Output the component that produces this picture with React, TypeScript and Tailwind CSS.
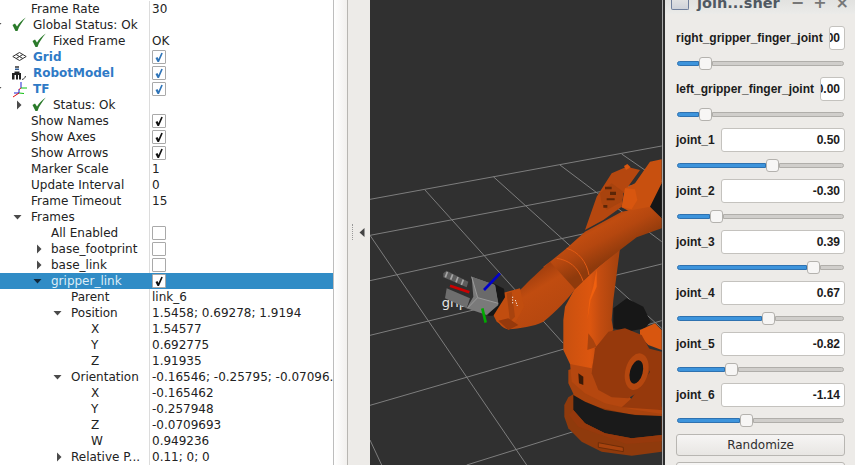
import React from "react";

type Row = {
  label: string;
  indent: number;
  value?: string;
  check?: "blue" | "black" | "none";
  arrow?: { x: number; dir: "down" | "right" };
  icon?: "ok" | "grid" | "robot" | "tf";
  iconX?: number;
  bold?: boolean;
  selected?: boolean;
};

const rows: Row[] = [
  { label: "Frame Rate", indent: 31, value: "30" },
  { label: "Global Status: Ok", indent: 33, icon: "ok", iconX: 12, arrow: { x: -7, dir: "down" } },
  { label: "Fixed Frame", indent: 53, value: "OK", icon: "ok", iconX: 32 },
  { label: "Grid", indent: 33, bold: true, check: "blue", icon: "grid", iconX: 12 },
  { label: "RobotModel", indent: 33, bold: true, check: "blue", icon: "robot", iconX: 11 },
  { label: "TF", indent: 33, bold: true, check: "blue", icon: "tf", iconX: 11, arrow: { x: -7, dir: "down" } },
  { label: "Status: Ok", indent: 53, icon: "ok", iconX: 32, arrow: { x: 14, dir: "right" } },
  { label: "Show Names", indent: 31, check: "black" },
  { label: "Show Axes", indent: 31, check: "black" },
  { label: "Show Arrows", indent: 31, check: "black" },
  { label: "Marker Scale", indent: 31, value: "1" },
  { label: "Update Interval", indent: 31, value: "0" },
  { label: "Frame Timeout", indent: 31, value: "15" },
  { label: "Frames", indent: 31, arrow: { x: 13, dir: "down" } },
  { label: "All Enabled", indent: 51, check: "none" },
  { label: "base_footprint", indent: 51, check: "none", arrow: { x: 34, dir: "right" } },
  { label: "base_link", indent: 51, check: "none", arrow: { x: 34, dir: "right" } },
  { label: "gripper_link", indent: 51, check: "black", selected: true, arrow: { x: 33, dir: "down" } },
  { label: "Parent", indent: 71, value: "link_6" },
  { label: "Position", indent: 71, value: "1.5458; 0.69278; 1.9194", arrow: { x: 53, dir: "down" } },
  { label: "X", indent: 91, value: "1.54577" },
  { label: "Y", indent: 91, value: "0.692775" },
  { label: "Z", indent: 91, value: "1.91935" },
  { label: "Orientation", indent: 71, value: "-0.16546; -0.25795; -0.07096.", arrow: { x: 53, dir: "down" } },
  { label: "X", indent: 91, value: "-0.165462" },
  { label: "Y", indent: 91, value: "-0.257948" },
  { label: "Z", indent: 91, value: "-0.0709693" },
  { label: "W", indent: 91, value: "0.949236" },
  { label: "Relative P...", indent: 71, value: "0.11; 0; 0", arrow: { x: 54, dir: "right" } },
];

function Arrow({ dir, selected }: { dir: "down" | "right"; selected?: boolean }) {
  const c = selected ? "#10283c" : "#4a4a4a";
  return (
    <svg width="10" height="10" viewBox="0 0 10 10" className="block">
      {dir === "down" ? <path d="M0.5 3h8l-4 4.500z" fill={c} /> : <path d="M3 0.500v9l4.500-4.500z" fill={c} />}
    </svg>
  );
}

function OkIcon() {
  return (
    <svg width="15" height="15" viewBox="0 0 15 15" className="block">
      <path d="M0.500 8L3 6.500L5 9.500C7 6 10 3 13.800 0.500C10.500 4.500 7 9 5.500 14L3.500 14z" fill="#2a7a2a" />
    </svg>
  );
}

function GridIcon() {
  return (
    <svg width="15" height="15" viewBox="0 0 15 15" className="block">
      <path d="M0.800 7.500L7.500 3.500l6.700 4-6.700 4zM4.100 5.500l6.700 4M10.900 5.500l-6.700 4" fill="none" stroke="#333" strokeWidth="1" />
    </svg>
  );
}

function RobotIcon() {
  return (
    <svg width="16" height="16" viewBox="0 0 16 16" className="block">
      <rect x="4" y="1" width="4" height="2" fill="#666" />
      <rect x="4" y="3.500" width="4" height="1.500" fill="#2f5f9a" />
      <path d="M1 14.500V8h2.500V6.500h5V8H10v6.500H8V10H7v4.500H5V10H3.500v4.500z" fill="#222" />
      <path d="M11 14.500c2-.5 3-1.500 3.500-3.500" fill="none" stroke="#333" strokeWidth="1" />
    </svg>
  );
}

function TfIcon() {
  return (
    <svg width="17" height="17" viewBox="0 0 17 17" className="block">
      <path d="M10 7V1" stroke="#2020d0" strokeWidth="1" />
      <path d="M10 7h6" stroke="#10c010" strokeWidth="1" />
      <path d="M8 8v4M8 12H3" stroke="#2020d0" strokeWidth="1" fill="none" />
      <path d="M8 12l5 .5" stroke="#10c010" strokeWidth="1" />
      <path d="M8 12l-6 4" stroke="#e01010" strokeWidth="1" />
      <path d="M10 7l-2 1.500" stroke="#e01010" strokeWidth="1" />
    </svg>
  );
}

function Check({ kind }: { kind: "blue" | "black" | "none" }) {
  return (
    <span className="w-[14px] h-[14px] border border-[#a9a9a9] bg-white rounded-[1px] flex items-center justify-center shrink-0">
      {kind !== "none" && (
        <svg width="10" height="11" viewBox="0 0 10 11" className="block">
          <path d="M1.500 6L3.500 5L4.500 7L7.300 0.800L8.800 1.200L5 10L3.500 10z" fill={kind === "blue" ? "#2f74b8" : "#111"} />
        </svg>
      )}
    </span>
  );
}

function TreeRow({ r }: { r: Row }) {
  return (
    <div className={`relative h-4 flex ${r.selected ? "bg-[#308cc6]" : ""}`}>
      {r.arrow && (
        <span className="absolute top-[3px]" style={{ left: r.arrow.x }}>
          <Arrow dir={r.arrow.dir} selected={r.selected} />
        </span>
      )}
      {r.icon && (
        <span className="absolute top-0" style={{ left: r.iconX }}>
          {r.icon === "ok" && <OkIcon />}
          {r.icon === "grid" && <GridIcon />}
          {r.icon === "robot" && <RobotIcon />}
          {r.icon === "tf" && <TfIcon />}
        </span>
      )}
      <div
        className={`w-[149px] shrink-0 whitespace-nowrap leading-4 ${r.bold ? "font-bold text-[#2f7ac6]" : r.selected ? "text-[#dcecf7]" : "text-[#222]"}`}
        style={{ paddingLeft: r.indent }}
      >
        {r.label}
      </div>
      <div className={`flex-1 border-l pl-[2px] flex items-center overflow-hidden whitespace-nowrap leading-4 text-[#222] ${r.selected ? "border-[#308cc6]" : "border-[#dcdcdc]"}`}>
        {r.check ? <Check kind={r.check} /> : r.value}
      </div>
    </div>
  );
}

const L = "#7d7d7d";
const gridLines = [
  [120, 598, 995, 438], [120, 706, 995, 540], [120, 842, 995, 650], [120, 1006, 995, 792], [120, 1216, 995, 962], [410, 1395, 730, 1295],
  [285, 570, 700, 1030], [490, 530, 995, 985], [690, 495, 995, 725], [875, 462, 995, 545], [120, 706, 590, 1395], [120, 1320, 155, 1395],
];

function Scene() {
  return (
    <svg viewBox="120 0 876 1395" preserveAspectRatio="none" className="w-full h-full block">
      <defs>
        <linearGradient id="armG" gradientUnits="userSpaceOnUse" x1="780" y1="640" x2="850" y2="770">
          <stop offset="0" stopColor="#96390c" />
          <stop offset="0.35" stopColor="#c04c10" />
          <stop offset="0.6" stopColor="#b5470f" />
          <stop offset="1" stopColor="#8f3a0c" />
        </linearGradient>
        <linearGradient id="elbowG" gradientUnits="userSpaceOnUse" x1="600" y1="800" x2="690" y2="950">
          <stop offset="0" stopColor="#96390c" />
          <stop offset="0.4" stopColor="#c04c10" />
          <stop offset="1" stopColor="#b5470f" />
        </linearGradient>
        <linearGradient id="linkG" gradientUnits="userSpaceOnUse" x1="700" y1="950" x2="860" y2="950">
          <stop offset="0" stopColor="#c8500f" />
          <stop offset="0.5" stopColor="#dc560f" />
          <stop offset="0.7" stopColor="#c24c10" />
          <stop offset="1" stopColor="#a8430e" />
        </linearGradient>
        <radialGradient id="hubG" gradientUnits="userSpaceOnUse" cx="860" cy="1095" r="125">
          <stop offset="0" stopColor="#ec5a14" />
          <stop offset="0.5" stopColor="#d8540f" />
          <stop offset="0.8" stopColor="#b0450e" />
          <stop offset="1" stopColor="#96390c" />
        </radialGradient>
        <linearGradient id="plateG" gradientUnits="userSpaceOnUse" x1="700" y1="1250" x2="995" y2="1350">
          <stop offset="0" stopColor="#8f3a0c" />
          <stop offset="0.4" stopColor="#c14d0f" />
          <stop offset="1" stopColor="#d8560f" />
        </linearGradient>
      </defs>
      <rect x="120" y="0" width="876" height="1395" fill="#303030" />
      {gridLines.map((l, i) => (
        <line key={i} x1={l[0]} y1={l[1]} x2={l[2]} y2={l[3]} stroke={L} strokeWidth="3" />
      ))}

      {/* lower part, traced in a crop whose origin is 675,930 */}
      <g transform="translate(675 930)">
        <path d="M28 285L40 262L60 250L320 290V425L230 437L140 425L80 395L40 355L28 320z" fill="url(#plateG)" />
        <path d="M40 180L70 170L110 220L170 265L240 290L320 300V320L220 312L130 292L60 262L40 220z" fill="#a8430e" />
        <path d="M55 255L90 275L150 300L240 315L320 318V375L230 385L150 370L90 340L55 300z" fill="#1a1a1a" />
        <path d="M55 300L90 340L150 370L230 385L320 375V394L215 402L130 372L70 350L42 315z" fill="#96390c" />
        <path d="M130 398L205 412V425L130 412z" fill="#a8430e" stroke="#6e2d08" strokeWidth="3" />
        <path d="M45 160L110 130L170 200L240 280L320 300V312L230 298L150 280L90 250L50 215z" fill="#b5470f" />
        <path d="M70 190L85 200L85 225L72 220z" fill="#3a1a08" />
      </g>

      {/* motor behind the link and hub */}
      <path d="M850 925L890 895L940 920L962 965L945 985L890 995L850 985z" fill="#171717" />

      {/* lower link */}
      <path d="M735 865L705 920L700 960L700 1050L720 1092L785 1105L800 1040L850 990L845 960L850 900L870 745L800 805z" fill="url(#linkG)" />
      <path d="M800 808L790 860L778 900L772 960L782 900L800 860z" fill="#f0600f" />
      <path d="M775 1000L772 1050L800 1040L790 1020z" fill="#a8430e" />

      {/* hub, same crop origin */}
      <g transform="translate(675 930)">
        <path d="M260 110L320 125V300L200 292L230 265L285 185z" fill="#96390c" />
        <path d="M255 60L300 40L320 60V120L280 105L255 80z" fill="#d8560f" />
        <path d="M120 115L160 65L210 55L260 75L285 120L285 180L260 240L220 265L170 262L130 240L110 190z" fill="url(#hubG)" />
        <ellipse cx="245" cy="185" rx="34" ry="56" fill="#b5470f" transform="rotate(15 245 185)" />
        <ellipse cx="244" cy="186" rx="19" ry="36" fill="#151515" transform="rotate(15 244 186)" />
      </g>

      {/* upper part, traced in a crop whose origin is 660,450 */}
      <g transform="translate(660 450)">
        <path d="M105 240L140 140L185 70L230 50L270 60L220 130L215 170L160 210z" fill="#b5470f" />
        <path d="M150 130L185 100L220 125L215 155L170 180L155 160z" fill="#a8430e" />
        <path d="M165 110h20v8h-20zM180 125h18v10h-18zM170 145h24v6h-24zM160 165h12v8h-12z" fill="#5c2607" />
        <path d="M222 48L232 42L242 52L228 60z" fill="#d8560f" />
        <path d="M300 145L335 100V205L300 175z" fill="#161616" />
        <path d="M215 172L225 115L255 100L300 35L335 28V100L300 170L300 185L240 185z" fill="#c8500f" />
        <path d="M215 172L225 115L255 118L262 150L245 178z" fill="#d8560f" />
      </g>

      {/* arm */}
      <path d="M640 800L660 785L710 745L765 695L875 635L960 620L995 655V685L920 712L870 750L800 805L735 868L700 900z" fill="url(#armG)" />

      {/* elbow */}
      <path d="M570 870C600 840 625 815 660 785L735 868C715 895 680 935 640 965C610 980 570 985 535 988C520 985 510 975 505 965L530 900z" fill="url(#elbowG)" />
      <path d="M680 775C715 780 745 800 760 845M710 745C745 755 770 785 777 825" fill="none" stroke="#e05a14" strokeWidth="3" />

      {/* wrist */}
      <path d="M515 880L570 865L582 920L560 960L535 988L500 965L490 945z" fill="#c14d0f" />
      <path d="M530 880L545 875L555 950L540 965z" fill="#a8430e" />
      <path d="M505 962L535 955L565 975L535 990z" fill="#96390c" />

      <text x="335" y="922" fontSize="39" fill="#e8e8e8" fontFamily="'DejaVu Sans', sans-serif">grip</text>

      {/* gripper, traced in a crop whose origin is 300,750 */}
      <g transform="translate(300 750)">
        <path d="M40 70L50 62L115 95L110 112L40 82z" fill="#5e5e5e" />
        <path d="M52 66L46 82M68 73L62 89M84 81L78 97M100 89L94 105" stroke="#a6a6a6" strokeWidth="5" />
        <path d="M50 115L120 145L110 175L45 145z" fill="#6e6e6e" />
        <path d="M190 100L222 116L225 142L190 197L172 197L200 155z" fill="#171717" />
        <path d="M125 80L195 105L205 165L170 195L110 175L130 140z" fill="#7a7a7a" />
        <path d="M125 80L195 105L205 160L143 143z" fill="#6a6a6a" />
        <path d="M125 80L143 143L205 160M143 143L112 175" stroke="#9a9a9a" strokeWidth="3" fill="none" />
      </g>
      <line x1="462" y1="870" x2="510" y2="820" stroke="#0000cc" strokeWidth="8" />
      <line x1="360" y1="857" x2="418" y2="877" stroke="#cc0000" strokeWidth="8" />
      <line x1="457" y1="925" x2="467" y2="968" stroke="#00aa00" strokeWidth="8" />
      <path d="M548 890v20M556 900l6 18" stroke="#f4e6dc" strokeWidth="3" strokeDasharray="4 4" />
    </svg>
  );
}

const joints = [
  { name: "right_gripper_finger_joint", val: "0.00", h: 705, w: "w-[16px]" },
  { name: "left_gripper_finger_joint", val: "0.00", h: 705, w: "w-[25px]" },
  { name: "joint_1", val: "0.50", h: 772, w: "w-[124px]" },
  { name: "joint_2", val: "-0.30", h: 716, w: "w-[124px]" },
  { name: "joint_3", val: "0.39", h: 813, w: "w-[124px]" },
  { name: "joint_4", val: "0.67", h: 768, w: "w-[124px]" },
  { name: "joint_5", val: "-0.82", h: 731, w: "w-[124px]" },
  { name: "joint_6", val: "-1.14", h: 746, w: "w-[124px]" },
];

function JointRow({ j }: { j: (typeof joints)[number] }) {
  return (
    <div className="h-[51px] flex flex-col">
      <div className="h-[24px] flex items-center justify-between">
        <span className="font-bold whitespace-nowrap text-[#1c1c1c]">{j.name}</span>
        <span className={`${j.w} h-[24px] shrink-0 bg-white border border-[#c4c2be] rounded-[3px] flex items-center justify-end overflow-hidden pr-[4px] font-bold text-[#1c1c1c]`}>
          {j.val}
        </span>
      </div>
      <div className="mt-[7px] pl-px pr-px flex items-center h-[13px]">
        <div className="h-[5px] bg-[#3d94dc] border border-[#2f72b0] rounded-l-[3px]" style={{ width: j.h - 677 - 6 }} />
        <div className="w-[13px] h-[13px] shrink-0 bg-[#f7f6f5] border border-[#b4b2ae] rounded-[3px]" />
        <div className="flex-1 h-[5px] bg-[#d0cecb] border border-[#b0aeaa] rounded-r-[3px]" />
      </div>
    </div>
  );
}

export default function App() {
  return (
    <div className="w-[855px] h-[465px] overflow-hidden flex bg-white text-[12px] font-['DejaVu_Sans',sans-serif]">
      <div className="w-[333px] shrink-0 pt-px">
        {rows.map((r, i) => (
          <TreeRow key={i} r={r} />
        ))}
      </div>
      <div className="w-[14px] shrink-0 border-l border-[#bdbdbd] bg-gradient-to-r from-white to-[#f2f0ee]" />
      <div className="w-[23px] shrink-0 border-l border-[#b8b6b2] bg-[#edebe8] flex items-center gap-[4px] pl-[4px]">
        <div className="h-[16px] w-px border-l border-dotted border-[#999] mb-[1px]" />
        <svg width="6" height="9" viewBox="0 0 6 9" className="block ml-[2px] mb-[1px]">
          <path d="M5.500 0v9L0.500 4.500z" fill="#444" />
        </svg>
      </div>
      <div className="w-[292px] shrink-0">
        <Scene />
      </div>
      <div className="w-[3px] shrink-0 bg-[#2e2e2e] border-l border-[#a8a8a8]" />
      <div className="flex-1 flex flex-col bg-[#edebe8] font-['Liberation_Sans',sans-serif]">
        <div className="h-[14px] shrink-0 flex items-end overflow-hidden bg-gradient-to-b from-[#e2e2e0] to-[#ebebe9] pl-[6px] pr-[6px] pb-[6px]">
          <div className="w-[18px] h-[12px] -mb-[2px] rounded-b-[2px] bg-gradient-to-b from-[#e4e4e4] to-[#cfd3da] border-b border-x border-[#6f7f9c] shrink-0" />
          <div className="ml-[8px] text-[14.5px] leading-[10px] h-[10px] font-bold text-[#505862] whitespace-nowrap font-['DejaVu_Sans',sans-serif]">join...sher</div>
          <div className="ml-auto flex items-end gap-[9px] text-[#777] text-[16px] leading-[10px] h-[10px] font-bold font-['DejaVu_Sans',sans-serif]">
            <span>−</span>
            <span>+</span>
            <span>×</span>
          </div>
        </div>
        <div className="pt-[12px] pl-[11px] pr-[10px] flex-1 flex flex-col">
          {joints.map((j) => (
            <JointRow key={j.name} j={j} />
          ))}
          <div className="h-[22px] flex items-center justify-center border border-[#b8b6b2] rounded-[3px] bg-gradient-to-b from-[#f6f5f4] to-[#e8e6e3] text-[#2e2e2e] text-[12px] font-['DejaVu_Sans',sans-serif]">
            Randomize
          </div>
          <div className="mt-[6px] h-[23px] border border-[#b8b6b2] rounded-[3px] bg-[#f6f5f4]" />
        </div>
      </div>
    </div>
  );
}
